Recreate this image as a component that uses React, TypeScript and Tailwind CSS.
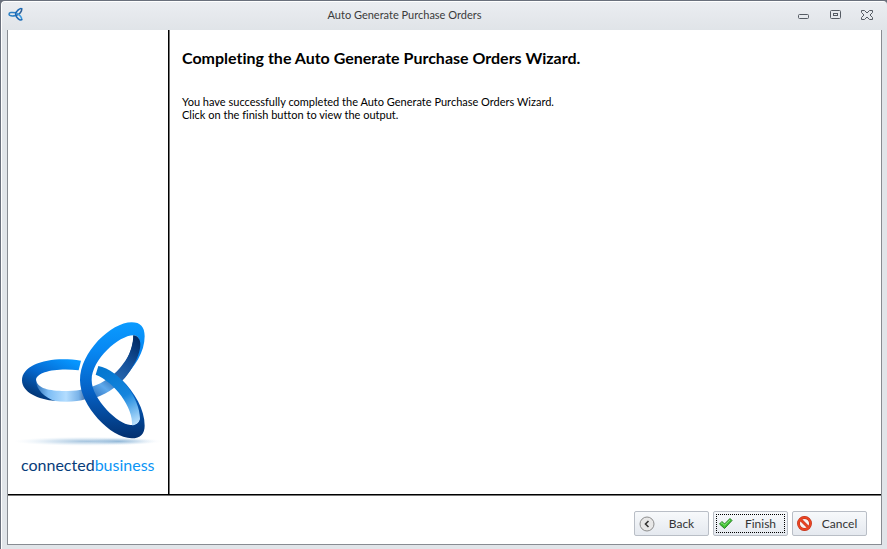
import React from "react";

const TitleButton: React.FC<{ label: string; children: React.ReactNode }> = ({
  label,
  children,
}) => (
  <button type="button" aria-label={label} className="w-3 h-3">
    <svg
      viewBox="0 0 12 12"
      className="w-3 h-3"
      fill="none"
      stroke="#555b63"
    >
      {children}
    </svg>
  </button>
);

const AppIcon = () => (
  <svg viewBox="0 0 16 16" className="w-4 h-4" fill="none" strokeLinecap="round">
    <path d="M7.5 5.8C4 5 1 5.600 1 7.200C1 8.800 4 9.500 7.500 8.500" stroke="#2a7fc4" strokeWidth="1.500" />
    <path d="M8.5 8.200C11.500 7.500 14 4.500 13.700 2" stroke="#2d5f96" strokeWidth="1.500" />
    <path d="M9.500 6.500C12 8 14 11 13.700 12.500" stroke="#3b9be0" strokeWidth="1.500" />
    <path d="M13.700 1.800C12.500 .6 7.700 4 7.700 7.200C7.700 10.200 12 14 13.700 12.700" stroke="#1c69b4" strokeWidth="1.600" />
  </svg>
);

const Logo = () => (
  <svg viewBox="0 0 495 410" className="w-full" aria-hidden="true">
    <defs>
      <linearGradient id="ring" x1="0" y1="0" x2="0" y2="1">
        <stop offset="0" stopColor="#0a9bff" />
        <stop offset="0.250" stopColor="#0787f2" />
        <stop offset="0.600" stopColor="#0560c4" />
        <stop offset="1" stopColor="#03306f" />
      </linearGradient>
      <linearGradient id="left" x1="0.800" y1="0" x2="0.150" y2="1">
        <stop offset="0" stopColor="#0796ff" />
        <stop offset="0.450" stopColor="#0568cf" />
        <stop offset="1" stopColor="#02295f" />
      </linearGradient>
      <linearGradient id="leftFace" x1="0" y1="0" x2="1" y2="0">
        <stop offset="0" stopColor="#2e6fb4" />
        <stop offset="0.250" stopColor="#7dbdf5" />
        <stop offset="0.600" stopColor="#b3ddff" />
        <stop offset="0.850" stopColor="#78b2e8" />
        <stop offset="1" stopColor="#3d69a3" />
      </linearGradient>
      <linearGradient id="upperFace" gradientUnits="userSpaceOnUse" x1="385" y1="90" x2="255" y2="250">
        <stop offset="0" stopColor="#022c66" />
        <stop offset="0.350" stopColor="#14509a" />
        <stop offset="0.650" stopColor="#2a68ae" />
        <stop offset="0.850" stopColor="#5fa9ec" />
        <stop offset="1" stopColor="#3c83cd" />
      </linearGradient>
      <linearGradient id="lowerFace" gradientUnits="userSpaceOnUse" x1="290" y1="180" x2="380" y2="345">
        <stop offset="0" stopColor="#0578d1" />
        <stop offset="0.500" stopColor="#1585dd" />
        <stop offset="0.800" stopColor="#7ebff1" />
        <stop offset="1" stopColor="#c2e5ff" />
      </linearGradient>
      <radialGradient id="shadow">
        <stop offset="0" stopColor="#76a5cd" stopOpacity="0.700" />
        <stop offset="0.500" stopColor="#9fc2df" stopOpacity="0.400" />
        <stop offset="1" stopColor="#d9e8f5" stopOpacity="0" />
      </radialGradient>
    </defs>
    <ellipse cx="235" cy="394" rx="225" ry="14" fill="url(#shadow)" />
    <ellipse cx="325" cy="394" rx="115" ry="11" fill="url(#shadow)" />
    {/* left ring */}
    <path
      d="M78 208C80 238 125 244 174 243C192 243 207 241 218 238L229 267C200 276 163 277 130 272C95 265 72 235 78 208Z"
      fill="url(#leftFace)"
    />
    <path
      d="M213 152C125 137 36 160 36 211C36 247 84 269 137 273C104 265 78 238 78 211C78 185 142 173 206 181Z"
      fill="url(#left)"
    />
    {/* inner faces */}
    <path
      d="M370 76C373 128 326 205 242 232L257 263C337 237 391 158 391 91Z"
      fill="url(#upperFace)"
    />
    {/* front ring */}
    <path
      d="M365 37C304 37 210 126 210 211C210 287 302 385 365 385C392 385 404 371 404 347C404 299 374 247 334 208C375 172 404 126 404 79C404 51 391 37 365 37ZM370 76C384 76 390 88 388 106C382 142 351 181 313 207C358 251 388 294 388 325C388 340 376 346 361 345C325 343 245 268 245 210C245 149 327 76 370 76Z"
      fill="url(#ring)"
      fillRule="evenodd"
    />
    <path
      d="M370 76C369 125 340 181 300 204L313 233C352 202 391 145 391 103C391 87 383 77 370 76Z"
      fill="url(#upperFace)"
    />
    <path
      d="M257 194L265 168C327 180 391 264 390 327C386 340 377 345 366 346C371 294 314 216 257 194Z"
      fill="url(#lowerFace)"
    />
  </svg>
);

const BackIcon = () => (
  <svg viewBox="0 0 16 16" className="w-4 h-4" fill="none">
    <circle cx="8" cy="8" r="7" fill="#e7e7e7" stroke="#8d8d8d" />
    <path d="M9.500 5L6.500 8L9.500 11" stroke="#333" strokeWidth="1.600" />
  </svg>
);

const FinishIcon = () => (
  <svg viewBox="0 0 16 16" className="w-4 h-4">
    <path
      d="M1.500 8L4 5.500L6.500 8L12 2.500L14 4.500L6.500 12.500Z"
      fill="#3fc332"
      stroke="#277d24"
      strokeLinejoin="round"
    />
    <path d="M2.800 7.700L4 6.700L6.500 9.200L12 3.900" fill="none" stroke="#8be77d" />
  </svg>
);

const CancelIcon = () => (
  <svg viewBox="0 0 16 16" className="w-4 h-4" fill="none">
    <circle cx="7.500" cy="7.500" r="6" fill="#f7f1ef" stroke="#b92c13" strokeWidth="2.800" />
    <path d="M3.500 3.500L11.500 11.500" stroke="#b92c13" strokeWidth="2.600" />
    <circle cx="7.500" cy="7.500" r="6" stroke="#ea4524" strokeWidth="1.800" />
    <path d="M3.500 3.500L11.500 11.500" stroke="#ea4524" strokeWidth="1.800" />
  </svg>
);

const WizardButton: React.FC<{
  text: string;
  icon: React.ReactNode;
  focused?: boolean;
}> = ({ text, icon, focused }) => (
  <button
    type="button"
    className="relative w-[75px] h-[25px] pl-1 pr-1 flex items-center rounded-[2px] border border-[#b9bec6] bg-linear-to-b from-[#f7f9fb] to-[#e5e9ef] text-xs text-[#333]"
  >
    {icon}
    <span className="flex-1 pl-1 text-center">{text}</span>
    {focused && (
      <span className="absolute inset-[2px] border border-dotted border-black" />
    )}
  </button>
);

export default function App() {
  return (
    <div className="h-screen flex flex-col bg-[#6a707c] font-['Lato',sans-serif] [font-variant-ligatures:none]">
      <div className="flex-1 min-h-0 flex flex-col mt-px ml-px rounded-t-[4px] border-t border-l border-white bg-[#e1e5e9] pl-[5px] pr-[5px] pb-1">
        <header className="h-7 shrink-0 -mx-[5px] pl-[6px] pr-[14px] pb-[2px] flex items-center rounded-t-[4px] bg-linear-to-b from-[#ebedf1] to-[#e0e4e8]">
          <AppIcon />
          <h1 className="flex-1 pr-3 text-center text-[11px] leading-4 text-[#3b3b3b]">
            Auto Generate Purchase Orders
          </h1>
          <div className="flex gap-5">
            <TitleButton label="Minimize">
              <rect x="1.500" y="5.500" width="10" height="4" rx="1" />
            </TitleButton>
            <TitleButton label="Maximize">
              <rect x="1.500" y="1.500" width="10" height="8" rx="1" />
              <rect x="4.500" y="4.500" width="4" height="2" />
            </TitleButton>
            <TitleButton label="Close">
              <path d="M.5 1.500H3.500L6 4L8.500 1.500H11.500V3.500L9 6L11.500 8.500V10.500H8.500L6 8L3.500 10.500H.5V8.500L3 6L.5 3.500V1.500Z" />
            </TitleButton>
          </div>
        </header>

        <div className="flex-1 min-h-0 flex flex-col border border-t-0 border-[#888c92] bg-white">
          <main className="flex-1 min-h-0 flex">
            {/* Branding column */}
            <aside className="w-40 shrink-0 flex flex-col justify-end pb-[19px]">
              <div className="w-[167px] pl-[2px]">
                <Logo />
              </div>
              <p className="mt-2 pl-[13px] text-base leading-5 whitespace-nowrap text-[#073c7a]">
                connected<span className="text-[#0c95f5]">business</span>
              </p>
            </aside>
            <div className="w-px bg-black" />
            <div className="w-px bg-[#777]" />

            <section className="flex-1 pl-3 pt-[18px] text-black">
              <h2 className="text-base leading-5 font-bold">
                Completing the Auto Generate Purchase Orders Wizard.
              </h2>
              <p className="mt-[27px] text-[11px] leading-[13px]">
                You have successfully completed the Auto Generate Purchase
                Orders Wizard.
                <br />
                Click on the finish button to view the output.
              </p>
            </section>
          </main>

          <footer className="h-[50px] shrink-0 flex justify-end gap-1 pt-4 pr-[14px] border-t border-black shadow-[inset_0_1px_#777]">
            <WizardButton text="Back" icon={<BackIcon />} />
            <WizardButton text="Finish" icon={<FinishIcon />} focused />
            <WizardButton text="Cancel" icon={<CancelIcon />} />
          </footer>
        </div>
      </div>
    </div>
  );
}
